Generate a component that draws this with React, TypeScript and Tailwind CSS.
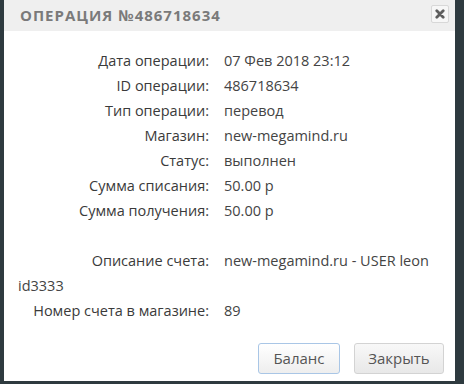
import React from "react"

const rows: [string, string][] = [
  ["Дата операции:", "07 Фев 2018 23:12"],
  ["ID операции:", "486718634"],
  ["Тип операции:", "перевод"],
  ["Магазин:", "new-megamind.ru"],
  ["Статус:", "выполнен"],
  ["Сумма списания:", "50.00 р"],
  ["Сумма получения:", "50.00 р"],
]

function Row({ label, value }: { label: string; value: string }) {
  return (
    <div className="leading-[25px]">
      <span className="inline-block w-[191px] text-right mr-[15px] text-[#3a3a3a]">{label}</span>
      <span className="text-[#444]">{value}</span>
    </div>
  )
}

export default function App() {
  return (
    <div className="w-[464px] h-[384px] bg-[#2e3a3f] pl-[4px]" style={{ fontFamily: "'Open Sans', 'Liberation Sans', sans-serif" }}>
      <div className="w-[451px] h-[381px] bg-white flex flex-col">
        <div className="h-[31px] bg-[#efefef] flex items-center justify-between pl-[16px] pr-[6px]">
          <span className="text-[15px] font-bold tracking-[1px] text-[#7a7a7a]">ОПЕРАЦИЯ №486718634</span>
          <button className="w-[18px] h-[18px] border border-[#d8d8d8] bg-[#f7f7f7] rounded-[2px] flex items-center justify-center mb-[4px]">
            <svg width="10" height="10" viewBox="0 0 10 10">
              <path d="M1.8 1.8 L8.2 8.2 M8.2 1.8 L1.8 8.2" stroke="#5f5f5f" strokeWidth="2.8" strokeLinecap="round" />
            </svg>
          </button>
        </div>
        <div className="pt-[17px] pl-[14px] pr-[12px] text-[14.5px]">
          {rows.map(([l, v]) => (
            <Row key={l} label={l} value={v} />
          ))}
          <div className="h-[25px]" />
          <Row label="Описание счета:" value="new-megamind.ru - USER leon id3333" />
          <Row label="Номер счета в магазине:" value="89" />
        </div>
        <div className="flex justify-end gap-[14px] pr-[11px] mt-[20px]">
          <button className="w-[82px] h-[31px] border border-[#a9c6e6] rounded-[3px] bg-gradient-to-b from-[#ffffff] to-[#eeeeee] text-[15px] text-[#555]">
            Баланс
          </button>
          <button className="w-[90px] h-[31px] border border-[#d3d3d3] rounded-[3px] bg-gradient-to-b from-[#f8f8f8] to-[#e8e8e8] text-[15px] text-[#555]">
            Закрыть
          </button>
        </div>
      </div>
    </div>
  )
}
